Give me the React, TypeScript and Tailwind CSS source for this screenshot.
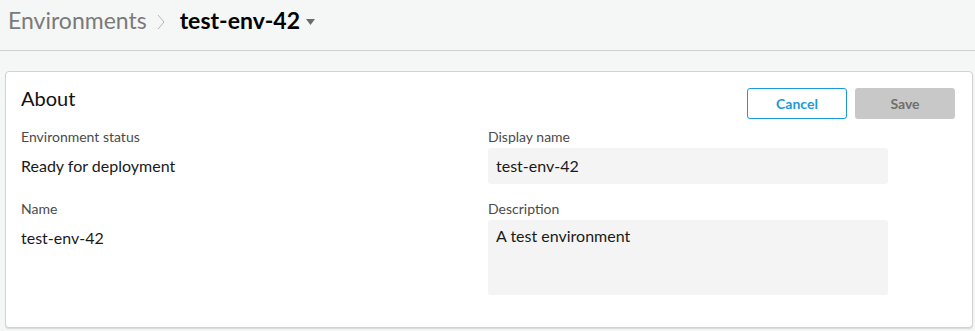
import React from "react";

function Field({ label, children }: { label: string; children: React.ReactNode }) {
  return (
    <div className="flex flex-col">
      <div className="text-[14px] leading-[18px] text-[#4a4a4a] mb-[2px]">{label}</div>
      {children}
    </div>
  );
}

export default function App() {
  return (
    <div className="min-h-[331px] bg-[#f5f6f6] font-['Lato','Liberation_Sans',sans-serif] text-[#1a1a1a]">
      {/* breadcrumb bar */}
      <div className="h-[51px] border-b border-[#cfd0d0]">
        <div className="flex items-center h-[40px] pl-[8px]">
          <span className="text-[23px] text-[#7a7a7a]">Environments</span>
          <svg width="8" height="16" viewBox="0 0 8 16" className="ml-[10px] mr-[15px] mt-[3px]">
            <polyline points="1,1 7,8 1,15" fill="none" stroke="#b5b5b5" strokeWidth="1" />
          </svg>
          <span className="text-[23px] font-bold text-black">test-env-42</span>
          <svg width="9" height="6" viewBox="0 0 9 6" className="ml-[6px] mt-[3px]">
            <polygon points="0,0 9,0 4.5,6" fill="#6b6b6b" />
          </svg>
        </div>
      </div>

      {/* about card */}
      <div className="mt-[20px] ml-[5px] mr-[2px] bg-white border border-[#d2d2d2] rounded-[4px] shadow-[0_1px_1px_rgba(0,0,0,0.12)] pl-[15px] pr-[17px] pt-[16px] pb-[32px]">
        <div className="flex justify-between items-start h-[31px]">
          <h2 className="text-[20px] leading-[20px] text-[#111]">About</h2>
          <div className="flex gap-[8px]">
            <button className="w-[100px] h-[31px] rounded-[3px] border border-[#1a9bd7] bg-white text-[14px] font-bold text-[#1a9bd7]">
              Cancel
            </button>
            <button className="w-[100px] h-[31px] rounded-[3px] bg-[#c8c8c8] text-[14px] font-bold text-[#6f6f6f]">
              Save
            </button>
          </div>
        </div>

        <div className="grid grid-cols-2 mt-[9px] gap-y-[16px]">
          <Field label="Environment status">
            <div className="h-[36px] flex items-center text-[16px]">Ready for deployment</div>
          </Field>
          <Field label="Display name">
            <div className="w-[400px] h-[36px] flex items-center px-[8px] bg-[#f4f4f4] rounded-[3px] text-[16px]">
              test-env-42
            </div>
          </Field>
          <Field label="Name">
            <div className="h-[36px] flex items-center text-[16px]">test-env-42</div>
          </Field>
          <Field label="Description">
            <div className="w-[400px] h-[75px] px-[8px] pt-[6px] bg-[#f4f4f4] rounded-[3px] text-[16px] leading-[20px]">
              A test environment
            </div>
          </Field>
        </div>
      </div>
    </div>
  );
}
